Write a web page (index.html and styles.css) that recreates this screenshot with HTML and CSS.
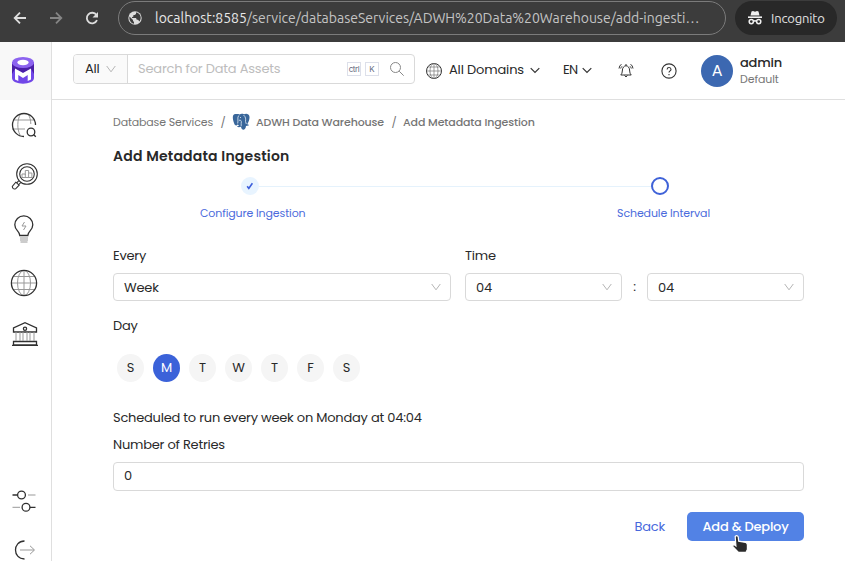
FILE: index.html
```html
<!DOCTYPE html>
<html lang="en">
<head>
<meta charset="utf-8">
<title>Add Metadata Ingestion</title>
<link rel="stylesheet" href="styles.css">
</head>
<body>
<div class="browser">
  <svg class="nav back" viewBox="0 0 16 16"><path d="M14 8H3M8 2.700 2.700 8 8 13.300"/></svg>
  <svg class="nav forward" viewBox="0 0 16 16"><path d="M2 8h11M8 2.700 13.300 8 8 13.300"/></svg>
  <svg class="nav reload" viewBox="0 0 16 16"><path d="M13 10.200A5.300 5.300 0 1 1 12.500 5"/><path class="fill" d="M14 2v5.500H8.500z"/></svg>
  <div class="address">
    <svg class="site" viewBox="0 0 14 14"><circle cx="7" cy="7" r="6.700" fill="#dcdcdc"/><path d="M1.500 5.500 5 9v1l1 1v1.700C3 12.400.8 9 1.500 5.500zM8 1.500v1.400L6.700 4H5.400v1.500L4 6.200V7h4l.8 1.800H10l1.500 1.600C14 7 12.500 3 9 1.600z" fill="#3c3c3c"/></svg>
    <span class="url"><b>localhost:8585</b>/service/databaseServices/ADWH%20Data%20Warehouse/add-ingesti…</span>
  </div>
  <div class="incognito">
    <svg viewBox="0 0 16 16"><path d="M4.500 1.500 6 1l2 .7L10 1l1.500.5 1 4h-9z" fill="#f0f0f0"/><path d="M1 7.200h14" stroke="#f0f0f0" stroke-width="1.600"/><g fill="none" stroke="#f0f0f0" stroke-width="1.500"><circle cx="4.300" cy="11.600" r="2.100"/><circle cx="11.700" cy="11.600" r="2.100"/><path d="M6.400 11.300q1.600-.9 3.200 0"/></g></svg>
    <span>Incognito</span>
  </div>
</div>
<div class="app">
  <nav class="sidebar">
    <div class="brand">
      <svg viewBox="0 0 22 27"><path d="M0 5v16c0 7.500 22 7.500 22 0V5z" fill="#7147e8"/><path d="M0 7v10l3-5 8 4 8-4 3 5V7z" fill="#4b1fa7"/><ellipse cx="11" cy="5.500" rx="11" ry="5.500" fill="#8c63ef"/><ellipse cx="11" cy="5.500" rx="5.600" ry="2.700" fill="#fff"/><path d="M3 11.500 11 16l8-4.500v11l-3.300 1.600v-6L11 21l-4.700-2.900v6L3 22.500z" fill="#fff"/></svg>
    </div>
    <svg class="item explore" viewBox="0 0 28 28"><path class="thin" d="M10.500 3C7 9 7 18 10 24M18 3c2 3 2.700 6 2.800 10M3 9h22M2 18h13"/><path d="M14 25.500A11.500 11.500 0 1 1 25.500 14"/><circle cx="21" cy="21" r="3.800"/><path d="m23.800 23.800 2 2"/></svg>
    <svg class="item quality" viewBox="0 0 28 28"><circle cx="16" cy="12" r="10.300"/><circle cx="16" cy="12" r="7.300"/><path class="thin" d="M11 15.500V12h3.300v3.500M14.300 13V8.500h3.300v7M17.600 11h3.300v4.500M10 15.500h12"/><path d="m7.800 18.700-2 2.200M9.800 20.500l-2 2.200M4.800 20.200l3.300 3-3.500 3.600q-3 .8-3.300-2.300z"/></svg>
    <svg class="item insight" viewBox="0 0 28 28"><path d="M9.800 20.500c0-4.500-5-5-5-10.700a9 9 0 0 1 18 0c0 5.700-5 6.200-5 10.700z"/><path class="thin" d="M10 23h8M10 25h8M10.500 27h7M14.500 7 12 11h4l-2.500 4"/></svg>
    <svg class="item domain" viewBox="0 0 28 28"><ellipse class="thin" cx="14" cy="14" rx="6.500" ry="12.500"/><path class="thin" d="M14 1v26M1 14h26M3.500 7.500h21M3.500 20.500h21"/><circle cx="14" cy="14" r="12.600"/></svg>
    <svg class="item govern" viewBox="0 0 28 28"><path d="M2.500 12V8L14 2.700 25.500 8v4zM2.500 21.500h23V25h-23zM1 25.300h26"/><circle cx="14" cy="8.700" r="1.600"/><path class="thin" d="M5 12v9M9 12v9M12 12v9M16 12v9M19 12v9M23 12v9"/></svg>
    <svg class="item settings" viewBox="0 0 28 28"><path d="M2.500 8h5M20 20.300h5.500"/><path class="thin" d="M18 8h7.500M2.500 20.300H10"/><circle cx="11.500" cy="8" r="3.900"/><circle cx="16" cy="20.300" r="3.900"/></svg>
    <svg class="item logout" viewBox="0 0 28 25"><path d="M14.500 5c-12 0-12 18 0 18"/><path class="thin" d="M10 14h14M20 9.800l4.500 4.200L20 18.200"/></svg>
  </nav>
  <div class="page">
    <header class="topbar">
      <div class="search">
        <div class="scope"><span>All</span><svg class="caret" viewBox="0 0 10 8"><path d="M.7 1 5 6.800 9.300 1"/></svg></div>
        <span class="placeholder">Search for Data Assets</span>
        <kbd>ctrl</kbd><kbd class="key">K</kbd>
        <svg class="lens" viewBox="0 0 16 16"><circle cx="6.500" cy="6.500" r="5"/><path d="m10.200 10.200 4.500 4.500"/></svg>
      </div>
      <svg class="globe" viewBox="0 0 18 18"><circle cx="9" cy="9" r="7.500"/><path class="grid" d="M9 1.500v15M1.500 9h15M3 5h12M3 13h12"/><ellipse class="grid" cx="9" cy="9" rx="4" ry="7.500"/></svg>
      <span class="domains">All Domains</span>
      <svg class="chev" viewBox="0 0 10 7"><path d="m.7 1.200 4.300 4.300 4.300-4.300"/></svg>
      <span class="lang">EN</span>
      <svg class="chev" viewBox="0 0 10 7"><path d="m.7 1.200 4.300 4.300 4.300-4.300"/></svg>
      <svg class="bell" viewBox="0 0 16 17"><path d="M2.800 13q1.500-1.500 1.500-4c0-7 7.400-7 7.400 0q0 2.500 1.500 4zM6.600 13.500q1.400 3 2.800 0M8 3.800V2M3.400 2.200Q1.300 3.700 1 6.500M12.600 2.200Q14.700 3.700 15 6.500M4 4.300Q3 5.200 2.700 6.500M12 4.300q1 .9 1.300 2.200"/></svg>
      <svg class="help" viewBox="0 0 16 16"><circle cx="8" cy="8" r="7.100"/><path d="M6.100 6.400c.1-2.600 3.900-2.500 3.900 0 0 1.500-2 1.500-2 3.200M8 11v1.200"/></svg>
      <div class="avatar">A</div>
      <div class="who"><strong>admin</strong><span>Default</span></div>
    </header>
    <main class="content">
      <div class="crumbs">
        <span class="c1">Database Services</span><i>/</i>
        <svg class="pg" viewBox="0 0 18 18"><path d="M4 1C.2.5.2 5 2 10c1 3 2.600 3 3.600 1.500l1.400.8c-.7 1-1.500 1-2 1.300 1.300.9 3 .5 4 .2.500 4 4.500 4.200 5-.8l2.500-.6q1-.5-.5-1l-.7-.2c2.200-4 3.200-8 1-9.700C14.700.3 13 1 12 1.200 10 .4 9 .6 7.500 1.400 6.500.8 5 .8 4 1z" fill="#39669a"/><path d="M6.800 2.500C5 4.500 6.500 7 5.700 10.500M11.500 2c2.500 2 2.200 4.200 2 6.500l.8 2.500M7 7.300q3-.7 2.200 3v3M8 4.500h1" fill="none" stroke="#d3e0ec" stroke-width=".9"/></svg>
        <b class="c2">ADWH Data Warehouse</b><i>/</i><b class="c3">Add Metadata Ingestion</b>
      </div>
      <h1>Add Metadata Ingestion</h1>
      <div class="track"><span class="done"><svg viewBox="0 0 10 10"><path d="m1.500 5.300 2 2.700L8 1.500"/></svg></span><span class="line"></span><span class="current"></span></div>
      <div class="steps"><span class="s1">Configure Ingestion</span><span class="s2">Schedule Interval</span></div>
      <div class="labels"><span>Every</span><span>Time</span></div>
      <div class="selects">
        <div class="select"><span>Week</span><svg class="caret" viewBox="0 0 10 8"><path d="M.7 1 5 6.800 9.300 1"/></svg></div>
        <div class="select"><span>04</span><svg class="caret" viewBox="0 0 10 8"><path d="M.7 1 5 6.800 9.300 1"/></svg></div>
        <span class="colon">:</span>
        <div class="select"><span>04</span><svg class="caret" viewBox="0 0 10 8"><path d="M.7 1 5 6.800 9.300 1"/></svg></div>
      </div>
      <div class="label day">Day</div>
      <div class="days"><span>S</span><span class="on">M</span><span>T</span><span>W</span><span>T</span><span>F</span><span>S</span></div>
      <div class="label summary">Scheduled to run every week on Monday at 04:04</div>
      <div class="label retries">Number of Retries</div>
      <div class="input">0</div>
      <div class="actions">
        <span class="link">Back</span>
        <div class="button"><span>Add &amp; Deploy</span>
          <svg class="cursor" viewBox="0 0 18 20"><path d="M4.200 2.500q1.700-2 3 .2l.5 4.500 7 1.200q1.700.6 1.700 2.500v4.500l-1.500 3H7.500L1.700 12.500q-.2-2 2-1.500l1.200 1z" fill="#2b2b2b" stroke="#fff" stroke-width="1.200"/></svg>
        </div>
      </div>
    </main>
  </div>
</div>
</body>
</html>
```
FILE: styles.css
```css
* { box-sizing: border-box; }
body {
  margin: 0;
  width: 845px;
  height: 561px;
  overflow: hidden;
  background: #fff;
  color: #292929;
  font: 13px/20px Poppins, Inter, "Open Sans", sans-serif;
  letter-spacing: -.22px;
  white-space: nowrap;
}
svg { display: block; flex: none; }

.browser { display: flex; height: 42px; background: #3c3c3c; padding-left: 12px; }
.nav { width: 16px; height: 16px; margin: 10px 20px 0 0; fill: none; stroke: #dedede; stroke-width: 1.8; }
.forward { stroke: #858585; }
.reload { margin-right: 18px; }
.nav .fill { fill: #dedede; stroke: none; }
.address {
  display: flex; align-items: center;
  width: 608px; height: 34px; margin-top: 1px; padding-left: 9px;
  border: 1px solid #7b7b7b; border-radius: 17px;
}
.site { width: 14px; height: 14px; }
.url { margin-left: 13px; font: 14px/20px Ubuntu, "Noto Sans", sans-serif; letter-spacing: -.01px; color: #c4c4c4; }
.url b { font-weight: 400; color: #e8e8e8; }
.incognito {
  display: flex; align-items: center;
  width: 102px; height: 34px; margin: 1px 0 0 9px; padding-left: 12px;
  border-radius: 17px; background: #282828; color: #e2e2e2;
  font: 13px/20px Ubuntu, "Noto Sans", sans-serif;
  letter-spacing: -.15px;
}
.incognito svg { width: 16px; height: 16px; margin-right: 8px; }

.app { display: flex; height: 519px; }
.sidebar { display: flex; flex-direction: column; width: 52px; border-right: 1px solid #dfdfdf; }
.brand { height: 58px; padding: 15px 0 0 12px; background: #f8f8f8; }
.brand svg { width: 22px; height: 27px; }
.item { width: 28px; height: 28px; margin-left: 10px; fill: none; stroke: #303030; stroke-width: 1.3; }
.thin { stroke: #999; stroke-width: 1; }
.explore { margin-top: 11px; }
.quality { margin-top: 23px; margin-left: 11px; stroke-width: 1.1; }
.insight { margin-top: 25px; }
.domain { margin-top: 26px; }
.govern { margin-top: 23px; margin-left: 11px; }
.settings { margin-top: auto; }
.logout { height: 25px; margin-top: 21px; }

.page { flex: 1; }
.topbar { display: flex; align-items: center; height: 58px; padding-left: 21px; border-bottom: 1px solid #dfdfdf; }
.search {
  display: flex; align-items: center;
  width: 342px; height: 30px; margin-top: -3px;
  border: 1px solid #d9d9d9; border-radius: 4px;
}
.scope { display: flex; align-items: center; width: 54px; height: 28px; padding-left: 11px; border-right: 1px solid #d9d9d9; background: #fafafa; border-radius: 3px 0 0 3px; }
.scope .caret { margin-left: 6px; }
.caret { width: 10px; height: 8px; fill: none; stroke: #b5b5b5; stroke-width: 1; }
.placeholder { width: 210px; padding-left: 10px; color: #bdbdbd; letter-spacing: -.2px; }
kbd { width: 14px; height: 14px; margin-left: 9px; border: 1px solid #dde0ea; color: #666b80; font: 8px/12px Inter, sans-serif; text-align: center; letter-spacing: -.4px; display: flex; justify-content: center; }
kbd.key { margin-left: 4px; letter-spacing: 0; }
.lens { width: 16px; height: 16px; margin-left: 10px; fill: none; stroke: #888; stroke-width: 1; }
.globe { width: 18px; height: 18px; margin-left: 10px; fill: none; stroke: #333; stroke-width: 1; }
.globe .grid { stroke: #777; stroke-width: .7; }
.domains { width: 75px; margin: -1px 0 0 6px; letter-spacing: -.15px; }
.chev { width: 10px; height: 7px; margin-left: 6px; fill: none; stroke: #333; stroke-width: 1.2; }
.lang { width: 17px; margin: -1px 0 0 23px; letter-spacing: -.6px; }
.lang + .chev { margin-left: 2px; }
.bell { width: 16px; height: 17px; margin-left: 26px; fill: none; stroke: #333; stroke-width: 1; }
.help { width: 16px; height: 16px; margin-left: 27px; fill: none; stroke: #333; stroke-width: 1.1; }
.avatar { width: 32px; height: 32px; margin-left: 24px; border-radius: 50%; background: #3c68b1; color: #fff; font-size: 16px; line-height: 31px; text-align: center; }
.who { margin: 2px 0 0 7px; }
.who strong { display: block; font-weight: 500; line-height: 16px; letter-spacing: -.2px; }
.who span { display: block; color: #777; font-size: 11px; line-height: 17px; letter-spacing: -.1px; }

.content { padding: 12px 41px 0 61px; }
.crumbs { display: flex; align-items: center; height: 20px; color: #757575; font-size: 11px; letter-spacing: -.15px; }
.crumbs b { font-weight: 500; letter-spacing: -.11px; }
.crumbs i { width: 4px; margin: 0 7.500px; font-style: normal; }
.pg { width: 18px; height: 18px; margin-right: 6px; }
h1 { margin: 12px 0 0; font-size: 14px; line-height: 24px; font-weight: 600; letter-spacing: .2px; }
.track { display: flex; align-items: center; height: 18px; margin: 9px 135px 0 128px; }
.done { display: flex; align-items: center; justify-content: center; width: 18px; height: 18px; border-radius: 50%; background: #e8f4ff; }
.done svg { width: 8px; height: 8px; fill: none; stroke: #3b5ddb; stroke-width: 2; }
.line { flex: 1; height: 1px; background: #e5f2fc; }
.current { width: 18px; height: 18px; border: 2px solid #3f62d8; border-radius: 50%; }
.steps { display: flex; justify-content: space-between; margin: 8px 94px 0 87px; color: #4b6bdc; font-size: 11px; letter-spacing: -.12px; }
.labels { display: grid; grid-template-columns: 338px 1fr; gap: 14px; margin-top: 23px; }
.selects { display: grid; grid-template-columns: 338px 14px 157px 25px 157px; margin-top: 7px; }
.select { display: flex; align-items: center; justify-content: space-between; height: 28px; padding: 0 10px; border: 1px solid #d9d9d9; border-radius: 4px; }
.select span { padding-top: 1px; }
.select:nth-child(2) { grid-column: 3; }
.select .caret { margin-right: -1px; }
.colon { text-align: center; line-height: 27px; }
.day { margin-top: 15px; }
.days { display: flex; gap: 9px; margin: 18px 0 0 4px; }
.days span { width: 27px; height: 28px; border-radius: 50%; background: #f5f5f5; text-align: center; line-height: 28px; }
.days .on { background: #3b62d9; color: #fff; }
.summary { margin-top: 26px; }
.retries { margin-top: 7px; }
.input { height: 29px; margin-top: 7px; padding-left: 10px; border: 1px solid #d9d9d9; border-radius: 4px; line-height: 26px; }
.actions { display: flex; align-items: center; justify-content: flex-end; margin-top: 21px; }
.link { margin-right: 22px; color: #4768dc; }
.button { position: relative; width: 117px; height: 29px; border-radius: 5px; background: #5282e5; color: #fff; line-height: 29px; text-align: center; font-weight: 500; }
.cursor { position: absolute; left: 44px; top: 22px; width: 18px; height: 20px; }
```
